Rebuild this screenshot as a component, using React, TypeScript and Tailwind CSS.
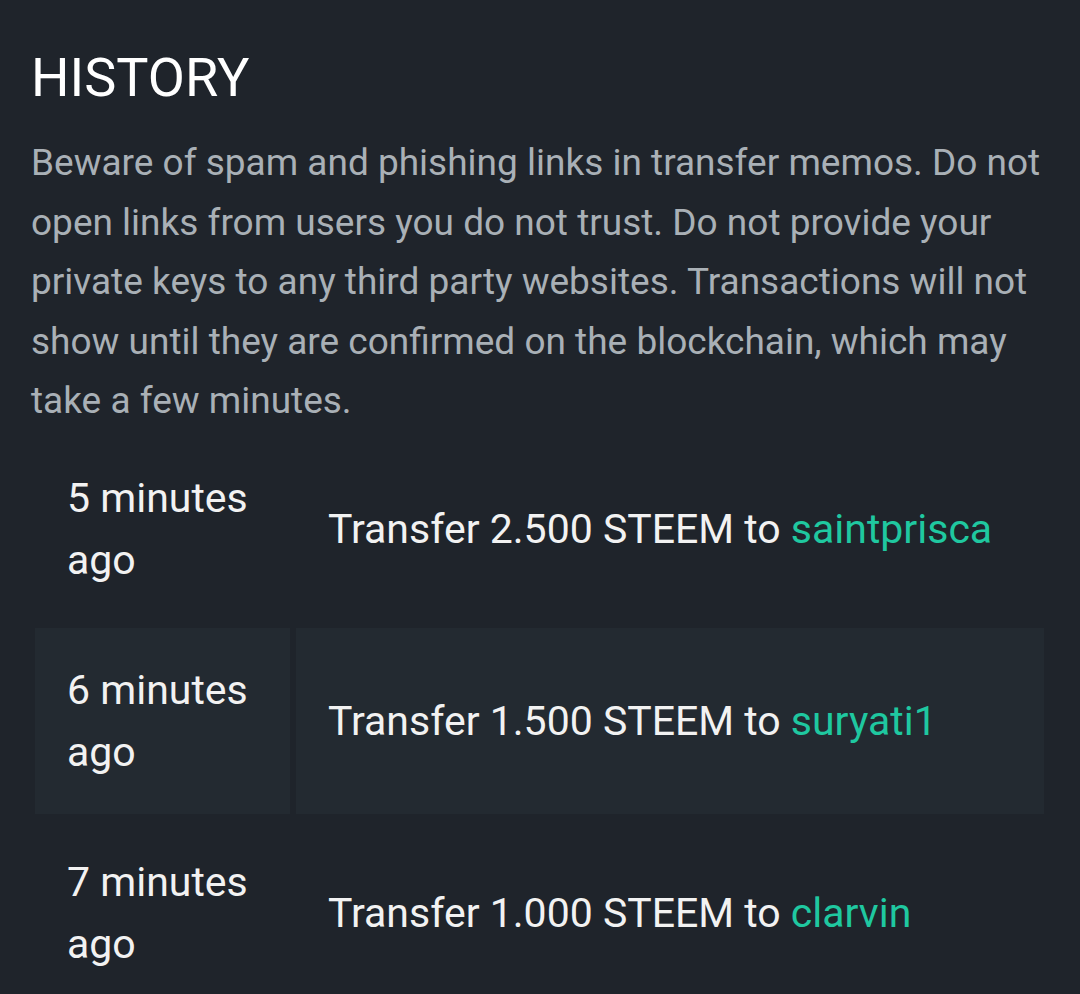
import React from 'react';

type Tx = { when: string; amount: string; to: string };

const rows: Tx[] = [
  { when: '5 minutes ago', amount: '2.500', to: 'saintprisca' },
  { when: '6 minutes ago', amount: '1.500', to: 'suryati1' },
  { when: '7 minutes ago', amount: '1.000', to: 'clarvin' },
];

export default function App() {
  return (
    <div
      className="min-h-screen bg-[#1f242b] px-[31px] pt-[46px] overflow-hidden"
      style={{ fontFamily: 'Roboto, "Noto Sans", sans-serif' }}
    >
      <h1 className="text-[54px] leading-[64px] text-white font-normal">HISTORY</h1>
      <p className="mt-[23px] text-[37px] leading-[59.5px] text-[#a9b0b6]">
        Beware of spam and phishing links in transfer memos. Do not open links from users you do not trust. Do not provide
        your private keys to any third party websites. Transactions will not show until they are confirmed on the
        blockchain, which may take a few minutes.
      </p>

      <div className="mt-[5px] ml-[4px] w-[1009px] grid grid-cols-[255px_1fr] gap-[6px]">
        {rows.map((r, i) => {
          const bg = i % 2 === 1 ? 'bg-[#232a31]' : '';
          return (
            <React.Fragment key={i}>
              <div className={`${bg} px-[32px] py-[31px] text-[41px] leading-[62px] text-[#f2f2f2]`}>
                {r.when}
              </div>
              <div className={`${bg} px-[32px] flex items-center text-[41px] leading-[62px] text-[#f2f2f2]`}>
                <span>
                  Transfer {r.amount} STEEM to <span className="text-[#1fc8a0]">{r.to}</span>
                </span>
              </div>
            </React.Fragment>
          );
        })}
      </div>
    </div>
  );
}
